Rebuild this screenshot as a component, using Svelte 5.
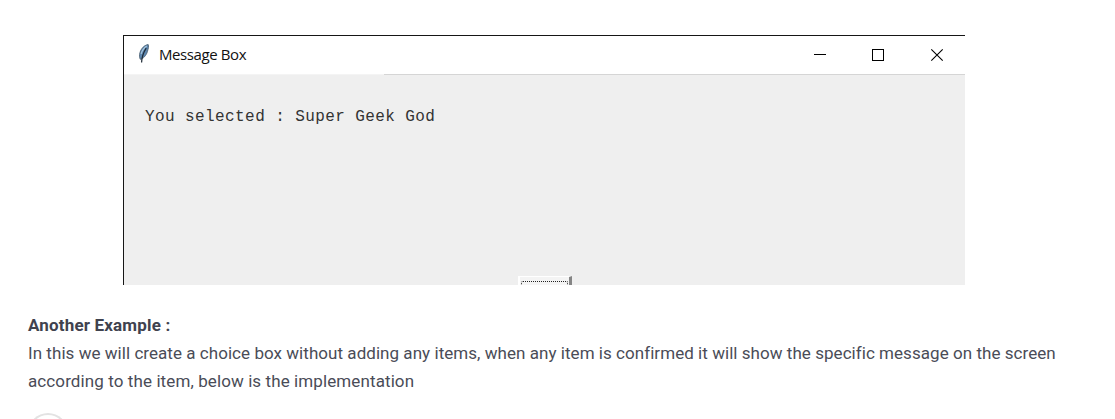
<script>
  const title = 'Message Box';
  const message = 'You selected : Super Geek God';
</script>

<main>
  <section class="window">
    <header>
      <svg class="feather" width="14" height="22" viewBox="0 0 14 22" aria-hidden="true">
        <path d="M11.2 1.6C7.6 2 4.2 5.4 3 9.5C2.3 12 2.4 14.5 3.3 16.3C6.2 15.8 9.3 12.4 10.3 8.8C11.3 5.8 11.9 3 11.2 1.6Z" fill="#5d87b0" stroke="#4a5f72" stroke-width=".9" />
        <path d="M9.8 3C7.2 4.6 5.1 7.4 4.1 11" fill="none" stroke="#a5c4dc" stroke-width="1.2" />
        <path d="M9.2 5.2C6.6 9.2 4.8 14 4.6 19.6" fill="none" stroke="#1d2935" stroke-width="1.2" />
      </svg>
      <span class="title">{title}</span>
      <svg class="controls" width="131" height="14" viewBox="0 0 131 14" fill="none" stroke="#000" aria-hidden="true">
        <path d="M0 6.5H12M58.5 1.5H69.5V12.5H58.5Z" shape-rendering="crispEdges" />
        <path d="M117.3 1.3L128.7 12.7M128.7 1.3L117.3 12.7" stroke-width="1.1" />
      </svg>
    </header>
    <div class="content">
      <p class="message">{message}</p>
      <div class="button"><span></span></div>
    </div>
  </section>
  <article>
    <strong>Another Example :</strong>
    <p class="first">In this we will create a choice box without adding any items, when any item is confirmed it will show the specific message on the screen</p>
    <p class="second">according to the item, below is the implementation</p>
  </article>
  <div class="circle"></div>
</main>

<style>
  :global(body) { background: #fff; overflow: hidden; }
  main { box-sizing: border-box; height: 419px; padding-top: 35px; overflow: hidden; }
  p { margin: 0; }
  .window {
    box-sizing: border-box; width: 842px; height: 250px; margin-left: 123px;
    border-top: 1px solid #161616; border-left: 1px solid #161616; background: #efefef;
    display: flex; flex-direction: column; overflow: hidden;
  }
  header {
    box-sizing: border-box; height: 39px; flex: none; display: flex; align-items: center;
    padding: 0 20px 1px 13px;
    background: linear-gradient(90deg, #f4f4f4 260px, #d5d5d5 260px) bottom / 100% 1px no-repeat #fff;
  }
  .feather { flex: none; margin-top: -2px; }
  .title { margin: -2px 0 0 8px; font: 15px/20px "Open Sans", sans-serif; letter-spacing: -.4px; color: #111; }
  .controls { margin-left: auto; }
  .content { flex: 1; display: flex; flex-direction: column; padding: 32px 0 0 21px; }
  .message { font: 16px/20px "Liberation Mono", "Courier New", monospace; letter-spacing: .41px; color: #333; white-space: pre; }
  .button {
    box-sizing: border-box; width: 54px; height: 9px; margin: auto 0 0 373px;
    padding: 4px 1px 0; background: #f4f4f4; border-top: 1px solid #fff;
    border-left: 2px solid #fff; border-right: 3px solid #858585;
  }
  .button span {
    display: block; height: 4px; border: 1px dotted #222; border-bottom: 0; border-radius: 2px 2px 0 0;
  }
  article { padding: 26px 0 0 28px; font: 17px/28px Roboto, sans-serif; color: #4a4c57; white-space: nowrap; }
  strong { display: block; letter-spacing: .17px; color: #40424e; }
  .first { letter-spacing: .046px; }
  .second { letter-spacing: .1px; }
  .circle {
    box-sizing: border-box; width: 40px; height: 40px; margin: 18px 0 0 28px;
    border: 2px solid #e3e3e3; border-left-color: #f3f3f3; border-radius: 50%;
  }
</style>
